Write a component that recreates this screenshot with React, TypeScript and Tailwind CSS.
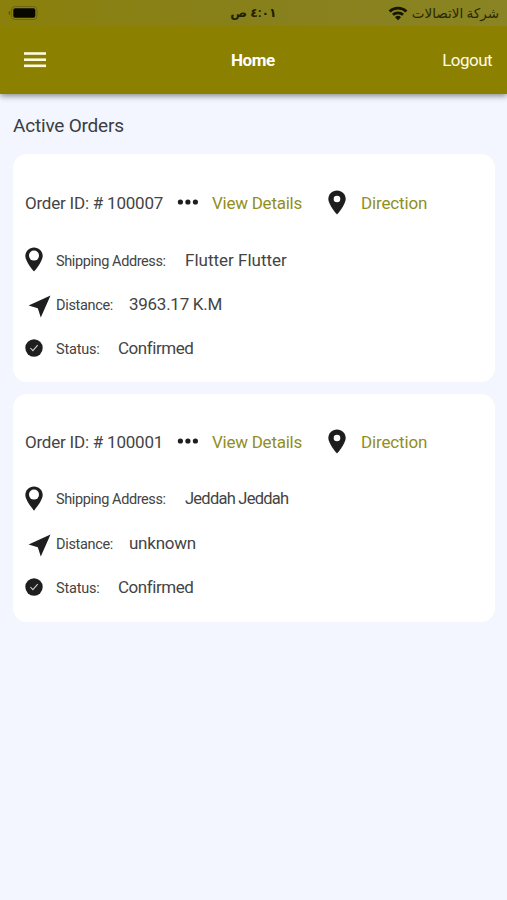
import type { ReactNode } from "react";

type Order = {
  id: string;
  address: string;
  addressStyle: string;
  distance: string;
  distanceStyle: string;
};

const orders: Order[] = [
  {
    id: "100007",
    address: "Flutter Flutter",
    addressStyle: "",
    distance: "3963.17 K.M",
    distanceStyle: "tracking-[-0.27px]",
  },
  {
    id: "100001",
    address: "Jeddah Jeddah",
    addressStyle: "text-[16.5px] tracking-[-0.75px]",
    distance: "unknown",
    distanceStyle: "tracking-[-0.25px]",
  },
];

function Battery() {
  return (
    <svg width="30" height="14" viewBox="0 0 30 14">
      <path d="M2.2 4.8Q.5 5.2.5 7t1.7 2.2z" fill="#5d5a10" />
      <rect x="3.5" y=".5" width="25.5" height="13" rx="3.5" fill="none" stroke="#6b6712" />
      <rect x="5.3" y="2.3" width="22" height="9.4" rx="2" fill="#080800" />
    </svg>
  );
}

function Wifi() {
  return (
    <svg width="20" height="15" viewBox="0 0 20 15" fill="none" stroke="#171700" strokeWidth="2.7">
      <path d="M1.6 5.4a12.2 12.2 0 0 1 16.8 0" />
      <path d="M4.9 8.8a7.5 7.5 0 0 1 10.2 0" />
      <path d="M7 11.2a4.4 4.4 0 0 1 6 0L10 14.2z" fill="#171700" stroke="none" />
    </svg>
  );
}

// hole sets the radius of the opening in the pin head
function Pin({ hole }: { hole: number }) {
  return (
    <svg width="18" height="25" viewBox="0 0 18 25">
      <path d="M9 .4C4.1.4.3 4.2.3 9.1.3 14.9 9 24.6 9 24.6s8.7-9.7 8.7-15.5C17.7 4.2 13.9.4 9 .4z" fill="#1e1e1e" />
      <circle cx="9" cy={hole > 4 ? 8.6 : 9} r={hole} fill="#fff" />
    </svg>
  );
}

function Arrow() {
  return (
    <svg width="23" height="23" viewBox="0 0 23 23" fill="#1e1e1e">
      <path d="M22.5.4.6 10.4l9.2 2.8 3 9.2z" />
    </svg>
  );
}

function Check() {
  return (
    <svg width="18" height="18" viewBox="0 0 18 18" fill="none">
      <circle cx="9" cy="9" r="8.7" fill="#1e1e1e" />
      <path d="m5.4 9 2.5 2.7 4.8-5.5" stroke="#cfcfcf" strokeWidth="1.1" />
    </svg>
  );
}

function Row({ icon, children }: { icon: ReactNode; children: ReactNode }) {
  return (
    <div className="flex h-11 items-center">
      <div className="w-[31px] shrink-0">{icon}</div>
      <div className="flex items-baseline pt-px">{children}</div>
    </div>
  );
}

function OrderCard({ order }: { order: Order }) {
  return (
    <article className="h-[228px] rounded-[14px] bg-white pt-[26px] pl-3 text-[17px] text-[#444] last:pt-[25px]">
      <div className="flex h-11 items-center whitespace-nowrap">
        <span className="w-[152px] pt-[3px] tracking-[-0.22px]">Order ID: # {order.id}</span>
        <svg className="w-[35px]" width="35" height="6" viewBox="0 0 35 6" fill="#1e1e1e">
          <circle cx="3.4" cy="3" r="2.6" />
          <circle cx="10.9" cy="3" r="2.6" />
          <circle cx="18.4" cy="3" r="2.6" />
        </svg>
        <a href="#" className="w-[116px] pt-[3px] tracking-[-0.25px] text-[#918e1c]">View Details</a>
        <div className="w-[33px]">
          <Pin hole={3.3} />
        </div>
        <a href="#" className="pt-[3px] tracking-[-0.15px] text-[#918e1c]">Direction</a>
      </div>
      <div className="mt-[14px] whitespace-nowrap">
        <Row icon={<div className="pb-px"><Pin hole={5} /></div>}>
          <span className="w-[129px] text-[14.5px] tracking-[-0.4px]">Shipping Address:</span>
          <span className={order.addressStyle}>{order.address}</span>
        </Row>
        <Row icon={<div className="pt-1 pl-[3px]"><Arrow /></div>}>
          <span className="w-[73px] text-[14.5px] tracking-[-0.33px]">Distance:</span>
          <span className={order.distanceStyle}>{order.distance}</span>
        </Row>
        <Row icon={<Check />}>
          <span className="w-[62px] text-[14.5px] tracking-[-0.2px]">Status:</span>
          <span className="tracking-[-0.45px]">Confirmed</span>
        </Row>
      </div>
    </article>
  );
}

export default function App() {
  return (
    <div className="h-[900px] w-[507px] overflow-hidden bg-[#f3f6fe] font-[Roboto,'DejaVu_Sans',sans-serif]">
      <header className="h-[94px] bg-[#8b8000] shadow-[0_2px_6px_rgba(0,0,0,0.45)]">
        <div className="flex h-[26px] items-center bg-gradient-to-r from-[#8b800b] via-[#88801b] to-[#8b8424] pr-2 pl-2 text-[#292800]">
          <div className="flex-1">
            <Battery />
          </div>
          <span dir="rtl" className="pt-px text-[12.5px] font-bold tracking-[-1.7px] text-[#201f00]">٤:٠١ ص</span>
          <div className="flex flex-1 items-center justify-end gap-1 text-[13.5px]">
            <Wifi />
            <span dir="rtl">شركة الاتصالات</span>
          </div>
        </div>
        <div className="flex h-[68px] items-center pr-[15px] pl-6 text-[17px] text-white">
          <button className="w-[207px]">
            <svg width="22" height="16" viewBox="0 0 22 16" fill="#fffbe0">
              <rect y=".2" width="22" height="2.6" />
              <rect y="6.4" width="22" height="2.6" />
              <rect y="12.5" width="22" height="2.6" />
            </svg>
          </button>
          <h1 className="pt-px font-bold tracking-[-0.4px]">Home</h1>
          <button className="ml-auto pt-px tracking-[-0.55px] text-[#fffbe8]">Logout</button>
        </div>
      </header>
      <main className="px-3 pt-[18px]">
        <h2 className="pt-px pl-px text-[19px] leading-[26px] tracking-[-0.2px] text-[#3a3d42]">Active Orders</h2>
        <div className="mt-[15px] flex flex-col gap-3 pl-px">
          {orders.map((order) => (
            <OrderCard key={order.id} order={order} />
          ))}
        </div>
      </main>
    </div>
  );
}
